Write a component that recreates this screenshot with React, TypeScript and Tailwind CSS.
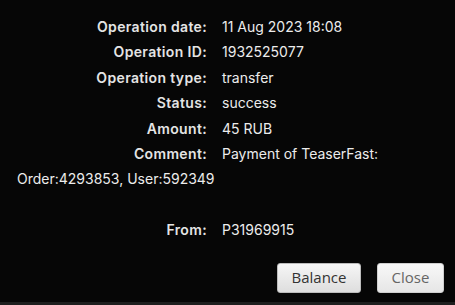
import React from "react";

const rows: [string, string][] = [
  ["Operation date:", "11 Aug 2023 18:08"],
  ["Operation ID:", "1932525077"],
  ["Operation type:", "transfer"],
  ["Status:", "success"],
  ["Amount:", "45 RUB"],
  ["Comment:", "Payment of TeaserFast: Order:4293853, User:592349"],
];

export default function App() {
  return (
    <div className="w-[455px] h-[305px] bg-[#060606] border-b-[3px] border-[#1e1e1e] flex flex-col" style={{ fontFamily: "Inter, 'Noto Sans', sans-serif" }}>
      <div className="pl-[17px] pr-[12px] pt-[14px] text-[14px] leading-[25.4px] text-[#ececec]">
        {rows.map(([l, v]) => (
          <div key={l}>
            <span className="inline-block w-[190px] text-right font-semibold tracking-[0.35px] mr-[15px] text-[#e4e4e4]">{l}</span>
            <span className="font-normal">{v}</span>
          </div>
        ))}
        <div className="mt-[25.4px]">
          <span className="inline-block w-[190px] text-right font-semibold tracking-[0.35px] mr-[15px] text-[#e4e4e4]">From:</span>
          <span>P31969915</span>
        </div>
      </div>
      <div className="flex justify-end gap-[16px] pr-[11px] mt-[20px]" style={{ fontFamily: "'Open Sans', sans-serif" }}>
        <button className="w-[84px] h-[30px] rounded-[3px] border border-[#bcbcbc] bg-gradient-to-b from-[#f6f6f6] to-[#dedede] text-[15px] text-[#333]">Balance</button>
        <button className="w-[67px] h-[30px] rounded-[3px] border border-[#cfcfcf] bg-gradient-to-b from-[#f8f8f8] to-[#e6e6e6] text-[15px] text-[#666]">Close</button>
      </div>
    </div>
  );
}
